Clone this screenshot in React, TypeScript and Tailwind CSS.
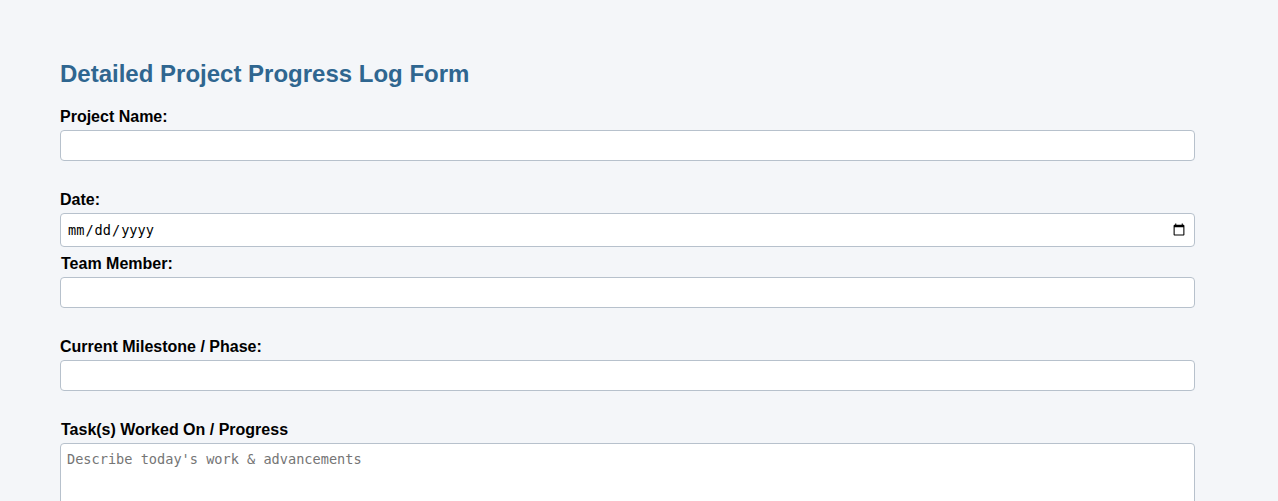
import { useState } from 'react';

const inputBase =
  'w-full rounded-[4px] border border-[#b7c1cc] bg-white px-[6px] text-[13.6px] text-black outline-none focus:border-[#2f6690]';

const App = () => {
  const [form, setForm] = useState({
    project: '',
    date: '',
    member: '',
    milestone: '',
    tasks: '',
  });

  const update = (key: keyof typeof form) => (e: React.ChangeEvent<HTMLInputElement | HTMLTextAreaElement>) =>
    setForm({ ...form, [key]: e.target.value });

  return (
    <div className="min-h-screen bg-[#f4f6f9] px-[60px] pt-[60px] font-['Liberation_Sans',Arial,sans-serif] text-black">
      <form className="flex w-[1135px] flex-col" onSubmit={(e) => e.preventDefault()}>
        {/* Header */}
        <h2 className="mb-[20px] text-[24px] font-bold leading-[28px] text-[#2f6690]">
          Detailed Project Progress Log Form
        </h2>

        <label htmlFor="project" className="mb-[4px] text-[16px] font-bold leading-[18px]">
          Project Name:
        </label>
        <input
          id="project"
          type="text"
          value={form.project}
          onChange={update('project')}
          className={`${inputBase} mb-[30px] h-[31px] font-['DejaVu_Sans_Mono',monospace]`}
        />

        <label htmlFor="date" className="mb-[4px] text-[16px] font-bold leading-[18px]">
          Date:
        </label>
        <input
          id="date"
          type="date"
          value={form.date}
          onChange={update('date')}
          className={`${inputBase} mb-[8px] h-[34px] font-['DejaVu_Sans_Mono',monospace]`}
        />

        <label htmlFor="member" className="mb-[4px] pl-px text-[16px] font-bold leading-[18px]">
          Team Member:
        </label>
        <input
          id="member"
          type="text"
          value={form.member}
          onChange={update('member')}
          className={`${inputBase} mb-[30px] h-[31px] font-['DejaVu_Sans_Mono',monospace]`}
        />

        <label htmlFor="milestone" className="mb-[4px] text-[16px] font-bold leading-[18px]">
          Current Milestone / Phase:
        </label>
        <input
          id="milestone"
          type="text"
          value={form.milestone}
          onChange={update('milestone')}
          className={`${inputBase} mb-[30px] h-[31px] font-['DejaVu_Sans_Mono',monospace]`}
        />

        <label htmlFor="tasks" className="mb-[4px] pl-px text-[16px] font-bold leading-[18px]">
          Task(s) Worked On / Progress
        </label>
        <textarea
          id="tasks"
          value={form.tasks}
          onChange={update('tasks')}
          placeholder="Describe today's work & advancements"
          className={`${inputBase} h-[100px] resize-y py-[7px] font-['DejaVu_Sans_Mono',monospace] leading-[16px] placeholder:text-[#757575]`}
        />
      </form>
    </div>
  );
};

export default App;
